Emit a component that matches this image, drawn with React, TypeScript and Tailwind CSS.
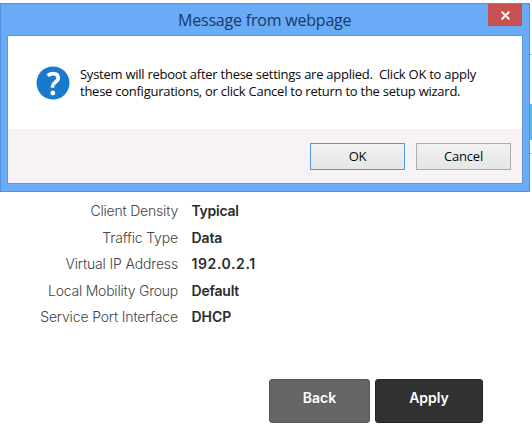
import { X } from 'lucide-react';

const settings = [
  { label: 'Client Density', value: 'Typical', labelStyle: 'tracking-[-0.2px]', valueStyle: 'tracking-[-0.25px]' },
  { label: 'Traffic Type', value: 'Data', labelStyle: 'tracking-[-0.15px]', valueStyle: 'tracking-[-0.1px]' },
  { label: 'Virtual IP Address', value: '192.0.2.1', labelStyle: 'tracking-[-0.15px]', valueStyle: 'tracking-[0.6px]' },
  { label: 'Local Mobility Group', value: 'Default', labelStyle: 'tracking-[-0.23px]', valueStyle: 'tracking-[-0.2px]' },
  { label: 'Service Port Interface', value: 'DHCP', labelStyle: 'tracking-[-0.15px]', valueStyle: 'tracking-[0px]' },
];

const QuestionIcon = () => (
  <svg width="34" height="34" viewBox="0 0 34 34" className="shrink-0">
    <circle cx="17" cy="17" r="16.5" fill="#1879cd" />
    <path
      d="M11.6 9.6C13.4 8.2 15.2 7.6 17 7.6c3.2 0 5.2 1.6 5.2 4.4 0 4.2-5.6 4.2-5.6 8.2v1.6"
      fill="none"
      stroke="#fff"
      strokeWidth="3.6"
    />
    <circle cx="16.8" cy="27" r="2.4" fill="#fff" />
  </svg>
);

const MessageDialog = () => (
  <div className="relative mt-[3px] h-[189px] w-[530px] border border-[#5292dc] bg-[#6aabf7] px-[6px] font-['Open_Sans',sans-serif]">
    <h1 className="h-[31px] pl-[171px] text-[16px] leading-[33px] tracking-[-0.2px] whitespace-nowrap text-[#173a66]">
      Message from webpage
    </h1>
    <button className="absolute top-0 right-[7px] flex h-[22px] w-[34px] items-center justify-center bg-[#c75050] text-white">
      <X size={13} strokeWidth={3.5} />
    </button>
    <div className="flex h-[149px] flex-col border border-[#5c97d8] bg-white">
      <div className="flex h-[93px] gap-[10px] pt-[30px] pl-[28px]">
        <QuestionIcon />
        <p className="text-[13px] leading-[16.5px] tracking-[-0.255px] whitespace-pre text-[#080808]">
          {'System will reboot after these settings are applied.  Click OK to apply\nthese configurations, or click Cancel to return to the setup wizard.'}
        </p>
      </div>
      <div className="flex flex-1 gap-[11px] bg-[#f6f2f6] pt-[14px] pl-[302px] text-[13px] tracking-[-0.2px] text-[#080808]">
        <button className="h-[27px] w-[95px] border border-[#4a9be0] bg-linear-to-b from-[#f1f1f1] to-[#e6e6e6]">
          OK
        </button>
        <button className="h-[27px] w-[95px] border border-[#adadad] bg-linear-to-b from-[#f1f1f1] to-[#e6e6e6]">
          Cancel
        </button>
      </div>
    </div>
  </div>
);

export default function App() {
  return (
    <main className="h-[447px] w-[532px] overflow-hidden bg-white font-[Inter,sans-serif]">
      <div className="flex">
        <MessageDialog />
        <div className="flex w-[2px] flex-col pt-[54px]">
          <div className="h-px bg-[#9dbfe0]" />
          <div className="mt-[49px] h-[36px] bg-[#5cb8cc]" />
          <div className="mt-[13px] h-px bg-[#9dbfe0]" />
        </div>
      </div>

      <dl className="mt-[6px] text-[14px] leading-[26.5px]">
        {settings.map(({ label, value, labelStyle, valueStyle }) => (
          <div key={label} className="flex gap-[13.5px] whitespace-nowrap">
            <dt className={`w-[178px] text-right font-light text-[#444] ${labelStyle}`}>{label}</dt>
            <dd className={`font-semibold text-[#2b2b2b] ${valueStyle}`}>{value}</dd>
          </div>
        ))}
      </dl>

      <div className="mt-[48px] ml-[269px] flex gap-[5px] text-[14px] font-semibold text-white">
        <button className="h-[44px] w-[101px] rounded-[3px] border border-[#565855] bg-[#646663] pb-[7px]">
          Back
        </button>
        <button className="h-[44px] w-[108px] rounded-[3px] border border-[#252525] bg-[#313131] pb-[7px]">
          Apply
        </button>
      </div>
    </main>
  );
}
